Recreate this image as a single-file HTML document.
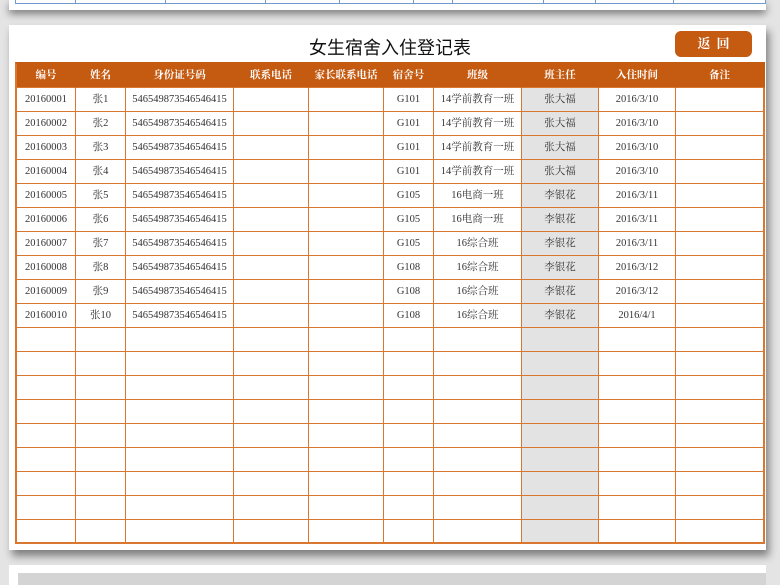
<!DOCTYPE html>
<html><head><meta charset="utf-8"><style>
*{margin:0;padding:0;box-sizing:border-box}
html,body{width:780px;height:585px;overflow:hidden}
body{background:#e4e4e4;position:relative;font-family:"Liberation Serif","Noto Serif CJK SC",serif}
.top{position:absolute;left:9px;top:0;width:757px;height:10px;background:#fff;box-shadow:0 4px 8px rgba(0,0,0,.45)}
.top .l{position:absolute;left:6px;right:0;top:0;height:4px;border-bottom:1px solid #6d9bd1}
.top .v{position:absolute;top:0;height:4px;width:1px;background:#6d9bd1}
.card{position:absolute;left:9px;top:25px;width:757px;height:525px;background:#fff;box-shadow:3px 6px 8px rgba(0,0,0,.45)}
.title{position:absolute;left:0;width:780px;top:34px;text-align:center;font-size:18px;font-family:"Liberation Sans","Noto Sans CJK SC",sans-serif;color:#111}
.btn{position:absolute;left:675px;top:31px;width:77px;height:26px;background:#c55a11;border-radius:6px;color:#fff;font-size:13px;text-align:center;line-height:26px;font-weight:bold;letter-spacing:6px;padding-left:6px}
table{position:absolute;left:15px;top:62px;border-collapse:separate;border-spacing:0;table-layout:fixed;width:750px;border-left:2px solid #d9762f;border-top:2px solid #c55a11}
td,th{border-right:1px solid #d9762f;border-bottom:1px solid #d9762f;height:24px;line-height:22px;text-align:center;vertical-align:middle;font-size:10.5px;color:#333;padding:1px 0 0 0;white-space:nowrap;overflow:hidden}
td span,th span{display:inline-block;vertical-align:middle;line-height:12px}
th{background:#c55a11;color:#fff;height:24px;line-height:23px;padding:0;font-weight:bold;border-color:#c55a11;border-bottom-color:#d9762f}
td.g{background:#e3e3e3}
tr:last-child td{border-bottom-width:2px}
td:last-child,th:last-child{border-right-width:2px}
.bot{position:absolute;left:9px;top:565px;width:757px;height:30px;background:#fff}
.bot div{position:absolute;left:9px;top:8px;right:0;height:30px;background:#d4d4d4}
</style></head><body>
<div class="top"><div class="l"></div>
<div class="v" style="left:6px"></div><div class="v" style="left:66px"></div><div class="v" style="left:156px"></div><div class="v" style="left:256px"></div><div class="v" style="left:330px"></div><div class="v" style="left:404px"></div><div class="v" style="left:443px"></div><div class="v" style="left:534px"></div><div class="v" style="left:586px"></div><div class="v" style="left:664px"></div><div class="v" style="left:756px"></div></div>
<div class="card"></div>
<div class="title">女生宿舍入住登记表</div>
<div class="btn">返回</div>
<table>
<colgroup><col style="width:59px"><col style="width:50px"><col style="width:108px"><col style="width:75px"><col style="width:75px"><col style="width:50px"><col style="width:88px"><col style="width:77px"><col style="width:77px"><col style="width:89px"></colgroup>
<tr><th>编号</th><th>姓名</th><th>身份证号码</th><th>联系电话</th><th>家长联系电话</th><th>宿舍号</th><th>班级</th><th>班主任</th><th>入住时间</th><th>备注</th></tr>
<tr><td><span>20160001</span></td><td><span>张1</span></td><td><span>546549873546546415</span></td><td></td><td></td><td><span>G101</span></td><td><span>14学前教育一班</span></td><td class="g"><span>张大福</span></td><td><span>2016/3/10</span></td><td></td></tr>
<tr><td><span>20160002</span></td><td><span>张2</span></td><td><span>546549873546546415</span></td><td></td><td></td><td><span>G101</span></td><td><span>14学前教育一班</span></td><td class="g"><span>张大福</span></td><td><span>2016/3/10</span></td><td></td></tr>
<tr><td><span>20160003</span></td><td><span>张3</span></td><td><span>546549873546546415</span></td><td></td><td></td><td><span>G101</span></td><td><span>14学前教育一班</span></td><td class="g"><span>张大福</span></td><td><span>2016/3/10</span></td><td></td></tr>
<tr><td><span>20160004</span></td><td><span>张4</span></td><td><span>546549873546546415</span></td><td></td><td></td><td><span>G101</span></td><td><span>14学前教育一班</span></td><td class="g"><span>张大福</span></td><td><span>2016/3/10</span></td><td></td></tr>
<tr><td><span>20160005</span></td><td><span>张5</span></td><td><span>546549873546546415</span></td><td></td><td></td><td><span>G105</span></td><td><span>16电商一班</span></td><td class="g"><span>李银花</span></td><td><span>2016/3/11</span></td><td></td></tr>
<tr><td><span>20160006</span></td><td><span>张6</span></td><td><span>546549873546546415</span></td><td></td><td></td><td><span>G105</span></td><td><span>16电商一班</span></td><td class="g"><span>李银花</span></td><td><span>2016/3/11</span></td><td></td></tr>
<tr><td><span>20160007</span></td><td><span>张7</span></td><td><span>546549873546546415</span></td><td></td><td></td><td><span>G105</span></td><td><span>16综合班</span></td><td class="g"><span>李银花</span></td><td><span>2016/3/11</span></td><td></td></tr>
<tr><td><span>20160008</span></td><td><span>张8</span></td><td><span>546549873546546415</span></td><td></td><td></td><td><span>G108</span></td><td><span>16综合班</span></td><td class="g"><span>李银花</span></td><td><span>2016/3/12</span></td><td></td></tr>
<tr><td><span>20160009</span></td><td><span>张9</span></td><td><span>546549873546546415</span></td><td></td><td></td><td><span>G108</span></td><td><span>16综合班</span></td><td class="g"><span>李银花</span></td><td><span>2016/3/12</span></td><td></td></tr>
<tr><td><span>20160010</span></td><td><span>张10</span></td><td><span>546549873546546415</span></td><td></td><td></td><td><span>G108</span></td><td><span>16综合班</span></td><td class="g"><span>李银花</span></td><td><span>2016/4/1</span></td><td></td></tr>
<tr><td></td><td></td><td></td><td></td><td></td><td></td><td></td><td class="g"></td><td></td><td></td></tr>
<tr><td></td><td></td><td></td><td></td><td></td><td></td><td></td><td class="g"></td><td></td><td></td></tr>
<tr><td></td><td></td><td></td><td></td><td></td><td></td><td></td><td class="g"></td><td></td><td></td></tr>
<tr><td></td><td></td><td></td><td></td><td></td><td></td><td></td><td class="g"></td><td></td><td></td></tr>
<tr><td></td><td></td><td></td><td></td><td></td><td></td><td></td><td class="g"></td><td></td><td></td></tr>
<tr><td></td><td></td><td></td><td></td><td></td><td></td><td></td><td class="g"></td><td></td><td></td></tr>
<tr><td></td><td></td><td></td><td></td><td></td><td></td><td></td><td class="g"></td><td></td><td></td></tr>
<tr><td></td><td></td><td></td><td></td><td></td><td></td><td></td><td class="g"></td><td></td><td></td></tr>
<tr><td></td><td></td><td></td><td></td><td></td><td></td><td></td><td class="g"></td><td></td><td></td></tr>
</table>
<div class="bot"><div></div></div>
</body></html>
